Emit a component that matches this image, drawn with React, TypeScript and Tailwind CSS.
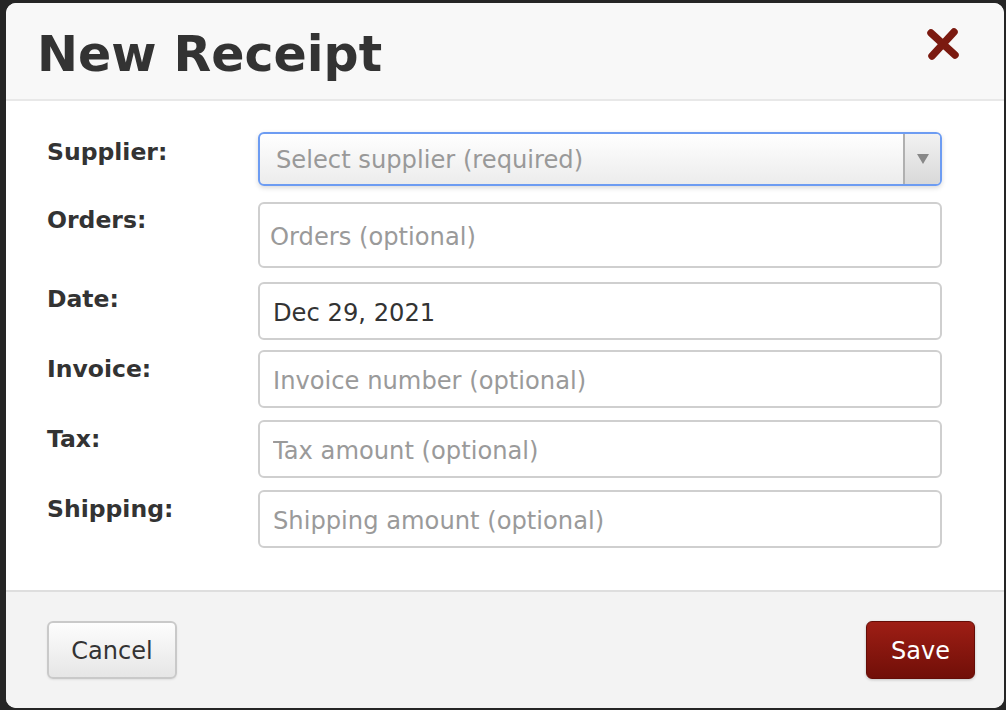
import React from "react"

const FIELDS = [
    { label: "Orders:", placeholder: "Orders (optional)", h: "h-[66px]", mt: "mt-[16px]", lpt: "pt-[4px]", pl: "pl-[10px]" },
    { label: "Date:", value: "Dec 29, 2021", h: "h-[58px]", mt: "mt-[14px]", lpt: "pt-[3px]", pl: "pl-[13px]" },
    { label: "Invoice:", placeholder: "Invoice number (optional)", h: "h-[58px]", mt: "mt-[10px]", lpt: "pt-[5px]", pl: "pl-[13px]" },
    { label: "Tax:", placeholder: "Tax amount (optional)", h: "h-[58px]", mt: "mt-[12px]", lpt: "pt-[5px]", pl: "pl-[13px]" },
    { label: "Shipping:", placeholder: "Shipping amount (optional)", h: "h-[58px]", mt: "mt-[12px]", lpt: "pt-[5px]", pl: "pl-[13px]" },
]

function CloseIcon() {
    return (
        <svg width="34" height="34" viewBox="0 0 34 34">
            <path
                d="M5 6 L29 28 M28 5 L6 29"
                stroke="#7b1a10"
                strokeWidth="7.5"
                strokeLinecap="round"
                fill="none"
            />
        </svg>
    )
}

export default function App() {
    return (
        <div
            className="w-[1006px] h-[710px] bg-[#252525] pt-[3px] pl-[6px] pr-[2px] pb-[2px] text-[#333]"
            style={{ fontFamily: '"DejaVu Sans", Verdana, sans-serif' }}
        >
            <div className="flex flex-col h-full bg-white rounded-[10px] overflow-hidden">
                {/* HEADER */}
                <div className="h-[98px] shrink-0 flex items-center justify-between bg-[#f8f8f8] border-b-2 border-[#e8e8e8] pl-[31px] pr-[44px]">
                    <h1 className="text-[49px] font-bold leading-none pt-[6px]">New Receipt</h1>
                    <div className="mb-[14px]">
                        <CloseIcon />
                    </div>
                </div>

                {/* FORM */}
                <div className="flex-1 pt-[31px] pl-[41px]">
                    <div className="flex">
                        <div className="w-[211px] pt-[6px] text-[23.5px] font-bold leading-[28px]">Supplier:</div>
                        <div className="w-[684px] h-[54px] flex rounded-[6px] border-2 border-[#6d9cf2] bg-gradient-to-b from-white to-[#ececec] shadow-[0_2px_5px_rgba(0,0,0,0.15)] overflow-hidden">
                            <div className="flex-1 flex items-center pl-[16px] pt-[2px] text-[24.2px] text-[#999]">
                                Select supplier (required)
                            </div>
                            <div className="w-[37px] flex items-center justify-center border-l-2 border-[#b0b0b0] bg-gradient-to-b from-[#f2f2f2] to-[#d9d9d9]">
                                <svg width="12" height="10" viewBox="0 0 12 10">
                                    <path d="M0 0 H12 L6 10 Z" fill="#888" />
                                </svg>
                            </div>
                        </div>
                    </div>

                    {FIELDS.map(f => (
                        <div key={f.label} className={`flex ${f.mt}`}>
                            <div className={`w-[211px] ${f.lpt} text-[23.5px] font-bold leading-[28px]`}>{f.label}</div>
                            <input
                                readOnly
                                defaultValue={f.value}
                                placeholder={f.placeholder}
                                className={`w-[684px] ${f.h} ${f.pl} pt-[3px] rounded-[6px] border-2 border-[#cfcfcf] bg-white text-[24.2px] text-[#333] placeholder:text-[#9a9a9a] outline-none`}
                            />
                        </div>
                    ))}
                </div>

                {/* FOOTER */}
                <div className="h-[118px] shrink-0 flex items-center justify-between bg-[#f3f3f3] border-t-2 border-[#dedede] pl-[41px] pr-[29px]">
                    <button className="w-[130px] h-[58px] rounded-[6px] border-2 border-[#c9c9c9] bg-gradient-to-b from-[#fdfdfd] to-[#e6e6e6] text-[24px] text-[#333] pt-[1px] shadow-[0_1px_2px_rgba(0,0,0,0.08)]">
                        Cancel
                    </button>
                    <button className="w-[109px] h-[58px] rounded-[6px] border border-[#650d07] bg-gradient-to-b from-[#9e1e15] to-[#710f08] text-[24px] text-white pt-[1px] shadow-[0_1px_3px_rgba(0,0,0,0.2)]">
                        Save
                    </button>
                </div>
            </div>
        </div>
    )
}
